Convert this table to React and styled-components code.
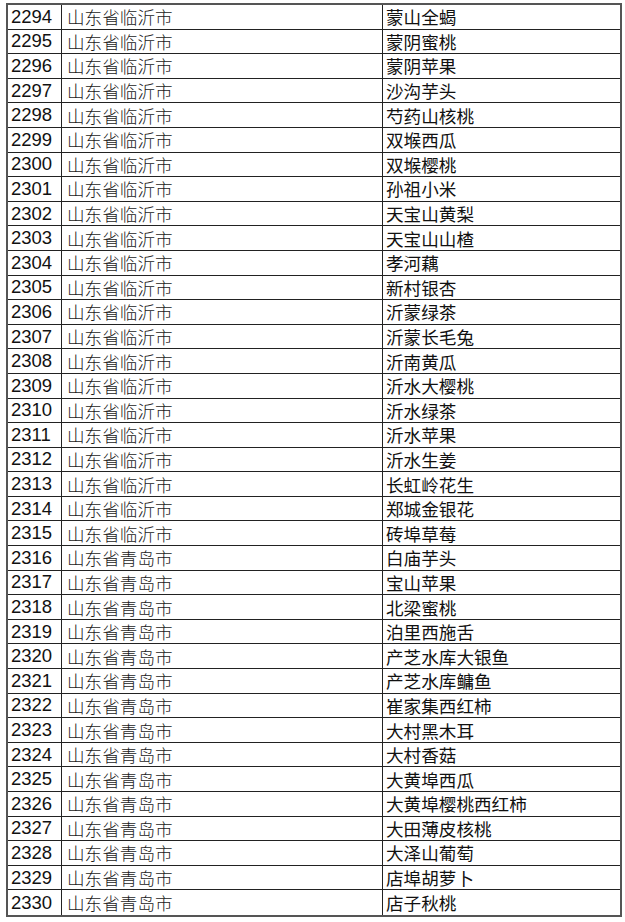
import React from 'react';
import styled, { createGlobalStyle } from 'styled-components';

const rows = [
  ['2294', '山东省临沂市', '蒙山全蝎'],
  ['2295', '山东省临沂市', '蒙阴蜜桃'],
  ['2296', '山东省临沂市', '蒙阴苹果'],
  ['2297', '山东省临沂市', '沙沟芋头'],
  ['2298', '山东省临沂市', '芍药山核桃'],
  ['2299', '山东省临沂市', '双堠西瓜'],
  ['2300', '山东省临沂市', '双堠樱桃'],
  ['2301', '山东省临沂市', '孙祖小米'],
  ['2302', '山东省临沂市', '天宝山黄梨'],
  ['2303', '山东省临沂市', '天宝山山楂'],
  ['2304', '山东省临沂市', '孝河藕'],
  ['2305', '山东省临沂市', '新村银杏'],
  ['2306', '山东省临沂市', '沂蒙绿茶'],
  ['2307', '山东省临沂市', '沂蒙长毛兔'],
  ['2308', '山东省临沂市', '沂南黄瓜'],
  ['2309', '山东省临沂市', '沂水大樱桃'],
  ['2310', '山东省临沂市', '沂水绿茶'],
  ['2311', '山东省临沂市', '沂水苹果'],
  ['2312', '山东省临沂市', '沂水生姜'],
  ['2313', '山东省临沂市', '长虹岭花生'],
  ['2314', '山东省临沂市', '郑城金银花'],
  ['2315', '山东省临沂市', '砖埠草莓'],
  ['2316', '山东省青岛市', '白庙芋头'],
  ['2317', '山东省青岛市', '宝山苹果'],
  ['2318', '山东省青岛市', '北梁蜜桃'],
  ['2319', '山东省青岛市', '泊里西施舌'],
  ['2320', '山东省青岛市', '产芝水库大银鱼'],
  ['2321', '山东省青岛市', '产芝水库鳙鱼'],
  ['2322', '山东省青岛市', '崔家集西红柿'],
  ['2323', '山东省青岛市', '大村黑木耳'],
  ['2324', '山东省青岛市', '大村香菇'],
  ['2325', '山东省青岛市', '大黄埠西瓜'],
  ['2326', '山东省青岛市', '大黄埠樱桃西红柿'],
  ['2327', '山东省青岛市', '大田薄皮核桃'],
  ['2328', '山东省青岛市', '大泽山葡萄'],
  ['2329', '山东省青岛市', '店埠胡萝卜'],
  ['2330', '山东省青岛市', '店子秋桃'],
];

const GlobalStyle = createGlobalStyle`
  html, body {
    margin: 0;
    background: #fff;
  }
  body {
    padding: 3px 0 0 6px;
  }
`;

const Grid = styled.div`
  display: grid;
  grid-template-columns: 54px 321px 237px;
  grid-auto-rows: 24.6px;
  width: 612px;
  border: 2px solid #555;
  color: #111;
`;

const Cell = styled.div`
  box-sizing: border-box;
  display: flex;
  align-items: center;
  padding-left: ${p => p.$pad}px;
  border-bottom: ${p => (p.$last ? 'none' : '1px solid #222')};
  border-right: ${p => (p.$end ? 'none' : '1px solid #222')};
  white-space: nowrap;
  overflow: hidden;
  font-family: "Noto Sans CJK SC", sans-serif;
  font-size: 17.6px;
  font-weight: 400;
`;

const NumCell = styled(Cell)`
  font-family: "Liberation Sans", Arial, sans-serif;
  font-size: 18.5px;
`;

const AreaCell = styled(Cell)`
  font-weight: 300;
  color: #1a1a1a;
`;

export default function App() {
  return (
    <>
      <GlobalStyle />
      <Grid>
        {rows.map(([n, p, name], i) => {
          const last = i === rows.length - 1;
          return (
            <React.Fragment key={n}>
              <NumCell $pad={3} $last={last}>{n}</NumCell>
              <AreaCell $pad={5} $last={last}>{p}</AreaCell>
              <Cell $pad={3} $last={last} $end>{name}</Cell>
            </React.Fragment>
          );
        })}
      </Grid>
    </>
  );
}
